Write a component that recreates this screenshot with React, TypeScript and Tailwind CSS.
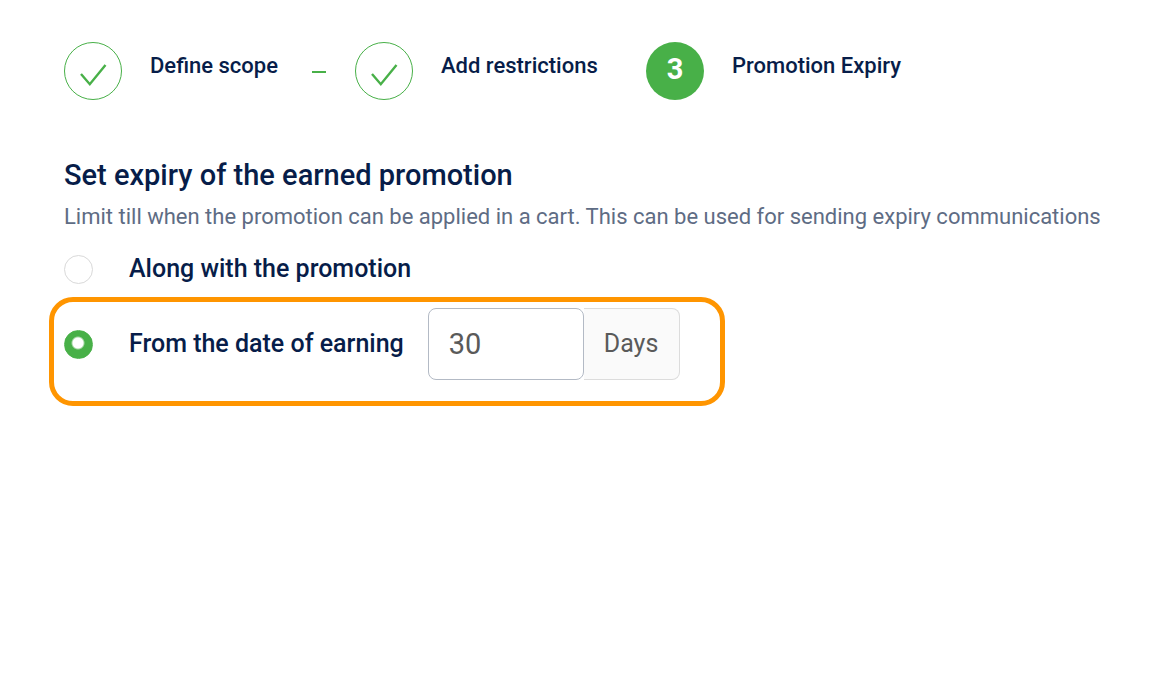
import { useState } from "react";

const steps = [
  { title: "Define scope", done: true, dash: true },
  { title: "Add restrictions", done: true, dash: false },
  { title: "Promotion Expiry", done: false, dash: false },
];

const CheckMark = () => (
  <svg className="mt-2 h-6 w-7" viewBox="0 0 28 24" fill="none" stroke="#48b048" strokeWidth="2.4" aria-hidden="true">
    <path d="M2 11 L10.8 21.2 L26.5 2" />
  </svg>
);

// green disc with the dot sitting slightly above the middle
const radioClass =
  "size-[29px] shrink-0 appearance-none rounded-full border border-[#d9d9d9] bg-white checked:border-[#48b048] checked:bg-[radial-gradient(circle_at_13px_12px,white_5px,#48b048_7px)]";

const App = () => {
  const [expiry, setExpiry] = useState("earning");
  const [days, setDays] = useState("30");

  return (
    <main className="min-h-screen bg-white px-[49px] pt-[42px] font-['Roboto',sans-serif] text-[#071d49]">
      <ol className="flex pl-[15px]">
        {steps.map((step, index) => (
          <li key={step.title} className="flex w-[291px] shrink-0 items-start">
            {step.done ? (
              <span className="flex size-[58px] shrink-0 items-center justify-center rounded-full border border-[#48b048]">
                <CheckMark />
              </span>
            ) : (
              <span className="flex size-[58px] shrink-0 items-center justify-center rounded-full bg-[#48b048] pb-0.5 text-[29px] font-bold text-white">
                {index + 1}
              </span>
            )}
            <span className="ml-7 whitespace-nowrap pt-2 text-[22px] leading-8 font-medium">{step.title}</span>
            {step.dash && <span className="mt-[29px] mr-[29px] ml-auto h-0.5 w-3.5 bg-[#48b048]" />}
          </li>
        ))}
      </ol>

      <form className="mt-[55px]">
        <fieldset>
          <legend className="pl-[15px] text-[29px] leading-10 font-medium">Set expiry of the earned promotion</legend>
          <p className="pt-1.5 pl-[15px] text-[22px] leading-8 text-[#5e6c84]">
            Limit till when the promotion can be applied in a cart. This can be used for sending expiry communications
          </p>

          <label className="mt-5 flex items-center gap-9 pl-[15px] text-[25px] leading-8 font-medium">
            <input
              type="radio"
              name="expiry"
              className={radioClass}
              checked={expiry === "promotion"}
              onChange={() => setExpiry("promotion")}
            />
            Along with the promotion
          </label>

          <div className="mt-3 flex w-fit items-center rounded-3xl border-[5px] border-[#ff9500] pt-1.5 pr-10 pb-[21px] pl-2.5">
            <label className="flex items-center gap-9 text-[25px] leading-8 font-medium">
              <input
                type="radio"
                name="expiry"
                className={radioClass}
                checked={expiry === "earning"}
                onChange={() => setExpiry("earning")}
              />
              From the date of earning
            </label>
            <input
              type="text"
              aria-label="Number of days"
              className="ml-6 h-[72px] w-[156px] rounded-lg border border-[#b3bac5] px-5 text-[29px] text-[#5a5a5a]"
              value={days}
              onChange={(e) => setDays(e.target.value)}
            />
            <span className="flex h-[72px] w-24 items-center rounded-r-lg border border-l-0 border-[#dcdcdc] bg-[#fafafa] pl-5 text-[25px] text-[#5a5a5a]">
              Days
            </span>
          </div>
        </fieldset>
      </form>
    </main>
  );
};

export default App;
